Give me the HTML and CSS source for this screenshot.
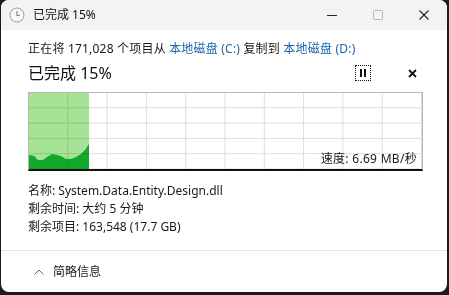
FILE: index.html
```html
<!DOCTYPE html>
<html lang="zh">
<head>
<meta charset="utf-8">
<link rel="stylesheet" href="styles.css">
</head>
<body>
<div class="window">
  <div class="titlebar">
    <svg class="app-icon" width="16" height="16" viewBox="0 0 16 16">
      <circle cx="8" cy="8" r="7" fill="#f7f7f7" stroke="#9a9a9a" stroke-width="1"/>
      <path d="M8 4 V8.5 H11" fill="none" stroke="#8a8a8a" stroke-width="1.2"/>
    </svg>
    <span class="title">已完成 15%</span>
    <div class="caption">
      <span class="cap-btn"><svg width="10" height="10" viewBox="0 0 10 10"><path d="M0 5.5 H10" stroke="#222" stroke-width="1"/></svg></span>
      <span class="cap-btn"><svg width="10" height="10" viewBox="0 0 10 10"><rect x="0.5" y="0.5" width="9" height="9" rx="1" fill="none" stroke="#b8b8b8" stroke-width="1"/></svg></span>
      <span class="cap-btn"><svg width="10" height="10" viewBox="0 0 10 10"><path d="M0.5 0.5 L9.5 9.5 M9.5 0.5 L0.5 9.5" stroke="#222" stroke-width="1.1"/></svg></span>
    </div>
  </div>
  <div class="content">
    <div class="line1">正在将 171,028 个项目从 <span class="link">本地磁盘 (C:)</span> 复制到 <span class="link">本地磁盘 (D:)</span></div>
    <div class="status-row">
      <span class="big">已完成 15%</span>
      <div class="ctrls">
        <span class="pause"><span class="bar"></span><span class="bar"></span></span>
        <span class="stop"><svg width="9" height="9" viewBox="0 0 9 9"><path d="M1 1 L8 8 M8 1 L1 8" stroke="#111" stroke-width="1.8"/></svg></span>
      </div>
    </div>
    <div class="graph">
      <svg class="plot" width="393" height="76" viewBox="0 0 393 76" preserveAspectRatio="none">
        <rect x="0" y="0" width="60" height="76" fill="#a6e396"/>
        <path d="M0 62 L5 63 L9 67 L14 67 L18 64 L23 61 L28 62 L32 63 L37 66 L42 66 L47 64 L52 61 L56 57 L60 51 L60 76 L0 76 Z" fill="#14a82a"/>
      </svg>
      <span class="speed">速度: 6.69 MB/秒</span>
    </div>
    <div class="info">
      <div>名称: System.Data.Entity.Design.dll</div>
      <div>剩余时间: 大约 5 分钟</div>
      <div>剩余项目: 163,548 (17.7 GB)</div>
    </div>
  </div>
  <div class="footer">
    <svg class="chev" width="10" height="6" viewBox="0 0 10 6"><path d="M0.5 5.5 L5 1 L9.5 5.5" fill="none" stroke="#666" stroke-width="1"/></svg>
    <span>简略信息</span>
  </div>
</div>
</body>
</html>
```
FILE: styles.css
```css
html, body {
  margin: 0;
  padding: 0;
  background: #1c1c1c;
  width: 449px;
  height: 295px;
  overflow: hidden;
}
body {
  font-family: "Noto Sans", "Noto Sans CJK SC", sans-serif;
  font-size: 12px;
  color: #1a1a1a;
}
.window {
  margin-left: 1px;
  width: 446px;
  height: 292px;
  background: #ffffff;
  border-radius: 8px;
  overflow: hidden;
  display: flex;
  flex-direction: column;
}
.titlebar {
  height: 30px;
  background: #f3f3f3;
  display: flex;
  align-items: center;
  padding-left: 8px;
  flex: none;
}
.app-icon { flex: none; }
.title {
  margin-left: 8px;
  font-size: 12px;
  line-height: 16px;
  color: #111;
}
.caption {
  margin-left: auto;
  display: flex;
}
.cap-btn {
  width: 46px;
  height: 30px;
  display: flex;
  align-items: center;
  justify-content: center;
}
.content {
  padding: 11px 26px 0 27px;
  flex: none;
}
.line1 {
  line-height: 16px;
  color: #1a1a1a;
  letter-spacing: 0.2px;
}
.link { color: #1c64a8; }
.status-row {
  display: flex;
  align-items: center;
  margin-top: 4px;
  height: 24px;
}
.big {
  font-size: 16px;
  line-height: 20px;
  color: #111;
}
.ctrls {
  margin-left: auto;
  display: flex;
  align-items: center;
}
.pause {
  width: 14px;
  height: 14px;
  border: 1px dotted #111;
  display: flex;
  align-items: center;
  justify-content: center;
  gap: 2px;
}
.pause .bar {
  width: 2px;
  height: 8px;
  background: #111;
}
.stop {
  margin-left: 37px;
  margin-right: 4px;
  display: flex;
}
.graph {
  position: relative;
  margin-top: 7px;
  width: 393px;
  height: 76px;
  border: 1px solid #b6b6b6;
  border-bottom: 2px solid #111;
  background-color: #fff;
  background-image:
    linear-gradient(to right, #d3e3d3 1px, transparent 1px),
    linear-gradient(to bottom, #d3e3d3 1px, transparent 1px);
  background-size: 39.3px 76px, 393px 15.3px;
  background-position: -1px 0, 0 -1px;
}
.plot {
  position: absolute;
  left: 0;
  top: 0;
  mix-blend-mode: multiply;
}
.speed {
  position: absolute;
  right: 5px;
  bottom: 2px;
  line-height: 16px;
  color: #1a1a1a;
  letter-spacing: 0.3px;
}
.info {
  margin-top: 11px;
  line-height: 18px;
}
.footer {
  margin-top: auto;
  height: 41px;
  border-top: 1px solid #e3e3e3;
  display: flex;
  align-items: center;
  padding-left: 33px;
  margin-bottom: 0;
}
.footer span {
  margin-left: 9px;
  line-height: 16px;
}
.chev { flex: none; }
```
